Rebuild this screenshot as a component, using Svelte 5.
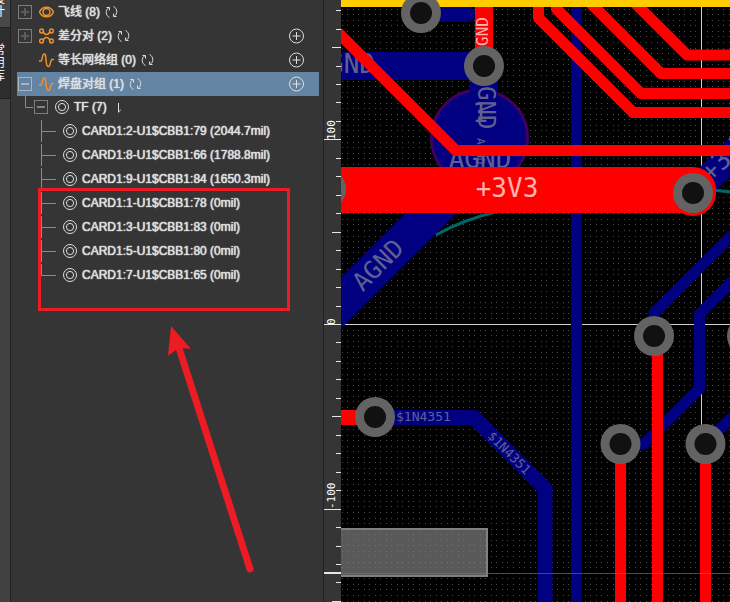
<script lang="ts">
  type Item = { label: string; level: number; icon: string; open?: boolean; toggle?: boolean; add?: boolean; last?: boolean };

  const items: Item[] = [
    { label: "飞线 (8)", level: 0, icon: "eye", toggle: true },
    { label: "差分对 (2)", level: 0, icon: "pair", toggle: true, add: true },
    { label: "等长网络组 (0)", level: 0, icon: "wave", add: true },
    { label: "焊盘对组 (1)", level: 0, icon: "wave", toggle: true, open: true, add: true },
    { label: "TF (7)", level: 1, icon: "pad", toggle: true, open: true },
    { label: "CARD1:2-U1$CBB1:79 (2044.7mil)", level: 2, icon: "pad" },
    { label: "CARD1:8-U1$CBB1:66 (1788.8mil)", level: 2, icon: "pad" },
    { label: "CARD1:9-U1$CBB1:84 (1650.3mil)", level: 2, icon: "pad" },
    { label: "CARD1:1-U1$CBB1:78 (0mil)", level: 2, icon: "pad" },
    { label: "CARD1:3-U1$CBB1:83 (0mil)", level: 2, icon: "pad" },
    { label: "CARD1:5-U1$CBB1:80 (0mil)", level: 2, icon: "pad" },
    { label: "CARD1:7-U1$CBB1:65 (0mil)", level: 2, icon: "pad", last: true },
  ];

  let selected = $state(3);

  // Board origin and zoom, in canvas units.
  const origin = { x: 701, y: 324 };
  const tickStep = 18.46;
  const gridStep = 5.53;

  const ticks = Array.from({ length: 33 }, (_, i) => i - 17).map((n) => ({
    y: Math.round(origin.y + n * tickStep),
    size: n % 10 === 0 ? 17 : n % 5 === 0 ? 9 : 5,
  }));

  const rulerLabels = [
    { text: "100", y: 140 },
    { text: "0", y: 325 },
    { text: "-100", y: 509 },
  ];

  function gridPath(x0: number, x1: number, y0: number, y1: number) {
    let d = "";
    for (let i = Math.ceil((x0 - origin.x) / gridStep); origin.x + i * gridStep < x1; i++) {
      for (let j = Math.ceil((y0 - origin.y) / gridStep); origin.y + j * gridStep < y1; j++) {
        d += `M${Math.round(origin.x + i * gridStep)} ${Math.round(origin.y + j * gridStep)}h1v1h-1z`;
      }
    }
    return d;
  }

  const vias = [
    [326, 189], [421, 13], [484, 66], [693, 193], [654, 336],
    [747, 336], [375, 417], [620.5, 444], [705.5, 444],
  ];
</script>

{#snippet icon(name: string)}
  <svg class="icon" class:orange={name !== "pad"} width="15" height="16" viewBox="0 0 15 16" aria-hidden="true">
    {#if name === "eye"}
      <path d="M0.5 8C2 4.6 4.6 3.2 7.5 3.2S13 4.6 14.5 8C13 11.4 10.4 12.8 7.5 12.8S2 11.4 0.5 8z" />
      <circle cx="7.5" cy="8" r="3.5" />
    {:else if name === "pair"}
      <circle cx="2.5" cy="3" r="1.9" /><circle cx="12.5" cy="3" r="1.9" />
      <circle cx="2.5" cy="13" r="1.9" /><circle cx="12.5" cy="13" r="1.9" />
      <path d="M4.2 3.5C4.8 5.8 5.5 6.5 7.5 6.5S10.2 5.8 10.8 3.5M4.2 12.5C4.8 10.2 5.5 9.5 7.5 9.5S10.2 10.2 10.8 12.5" />
    {:else if name === "wave"}
      <path d="M0 9H2C3.5 9 3 2 5.2 2S6.5 6 7 8 7 14.5 9.5 14.5 11 7.5 13 7.5H15" />
    {:else}
      <circle cx="7" cy="8" r="6.5" />
      <circle cx="7" cy="8" r="3.6" />
    {/if}
  </svg>
{/snippet}

<main>
  <nav class="tabs" aria-label="面板">
    <button type="button" class="tab active"><span>设计</span></button>
    <button type="button" class="tab"><span>常用库</span></button>
  </nav>

  <aside>
    <ul>
      {#each items as item, i}
        <li class="level{item.level}" class:selected={i === selected}>
          {#if item.level === 1}
            <svg class="link" width="9" height="24"><path d="M0.5 0V12.5H8" /></svg>
          {:else if item.level === 2}
            <svg class="link" width="15" height="24"><path d={item.last ? "M0.5 1V12.5H15" : "M0.5 1V23M0.5 12.5H15"} /></svg>
          {/if}
          {#if item.toggle}
            <button type="button" class="toggle" class:open={item.open} aria-label={item.label} aria-expanded={!!item.open}>
              <svg width="12" height="12"><path d={item.open ? "M2 6H10" : "M2 6H10M6 2V10"} /></svg>
            </button>
          {:else if item.level === 0}
            <span class="blank"></span>
          {/if}
          {@render icon(item.icon)}
          <button type="button" class="name" onclick={() => (selected = i)}>{item.label}</button>
          {#if item.level === 0}
            <button type="button" class="refresh" aria-label="刷新">
              <svg width="13" height="14" viewBox="0 0 13 14">
                <path d="M4.5 12.5C0.5 10.5 0 5 4 2.5M1.5 2.5H4.5V5.5M8.5 1.5C12.5 3.5 13 9 9 11.5M11.5 11.5H8.5V8.5" />
              </svg>
            </button>
          {:else if item.level === 1}
            <button type="button" class="refresh small" aria-label="刷新">
              <svg width="4" height="14"><path d="M1.5 3V12.5M1.5 12L4 9.5" /></svg>
            </button>
          {/if}
          {#if item.add}
            <button type="button" class="add" aria-label="新建">
              <svg width="16" height="16"><path d="M7.5 4V12M3.5 8H11.5" /><circle cx="7.5" cy="8" r="7" /></svg>
            </button>
          {/if}
        </li>
      {/each}
    </ul>
  </aside>

  <section class="board">
    <svg width="100%" height="100%" role="img" aria-label="PCB">
      <g transform="translate(-324 0)">
        <path class="grid" d={gridPath(341, 1400, 7, 1200)} />
        <path class="axis" d="M341 324.5H2000M701.5 0V440" />

        <g class="bottom">
          <path d="M421 14H467" stroke-width="16" />
          <path class="flat" d="M341 66H484" stroke-width="28" />
          <path class="flat" d="M484 66V138" stroke-width="28" />
          <path class="flat" d="M576.5 7V2000" stroke-width="11" />
          <path class="flat" d="M301 343L484 160" stroke-width="36" />
          <path class="flat" d="M693 194L793 94" stroke-width="28" />
          <path d="M654 336V313L754 213" stroke-width="11" />
          <path d="M754 259.5L699.5 314V388.5L644 444H620" stroke-width="11" />
          <path d="M705 444L755 394" stroke-width="11" />
          <path d="M375 417.5H474L545 488.5V2000" stroke-width="15" />
        </g>
        <circle class="round-pad" cx="479.5" cy="138" r="48" />
        <path class="flat bottom" d="M484 66V110" stroke-width="28" />

        <g class="net">
          <text x="375" y="73" font-size="26" text-anchor="end">GND</text>
          <text transform="translate(478 86) rotate(90)" font-size="24">GND</text>
          <text x="480" y="122" font-size="26" text-anchor="middle">1</text>
          <text transform="translate(477 138) rotate(90)" font-size="11">AGND</text>
          <text x="480" y="168" font-size="26" text-anchor="middle">AGND</text>
          <text transform="translate(384 271) rotate(-45)" font-size="25" text-anchor="middle">AGND</text>
          <text transform="translate(711 183) rotate(-45)" font-size="26">+3V3</text>
          <text x="396" y="421" font-size="13">$1N4351</text>
          <text transform="translate(506 456) rotate(45)" font-size="13" text-anchor="middle">$1N4351</text>
        </g>

        <path class="ratline" d="M436 235Q464 219 500 211M712 190L760 195" />

        <g class="top">
          <path d="M538.5 0V18L633 112.5H2000" stroke-width="11" />
          <path d="M556.5 0V9L641 93.5H2000" stroke-width="11" />
          <path d="M587.5 0L661 73.5H2000" stroke-width="11" />
          <path d="M632 0L687 55H2000" stroke-width="11" />
          <path d="M330 24.5L456 150.5H2000" stroke-width="11" />
          <path class="flat" d="M484 0V66" stroke-width="18" />
          <path d="M341 190H693" stroke-width="46" />
          <path d="M693 193h0" stroke-width="46" />
          <path class="flat" d="M341 417.5H375" stroke-width="15" />
          <path d="M657.5 345V2000M620.5 444V2000M705.5 444V2000" stroke-width="11" />
        </g>
        <g class="net light">
          <text transform="translate(488 46) rotate(-90)" font-size="16">GND</text>
          <text x="507" y="197" font-size="26" text-anchor="middle">+3V3</text>
        </g>

        <rect class="outline" x="341" y="0" width="2000" height="7" />
        {#each vias as [x, y]}
          <circle class="via" cx={x} cy={y} r="20" />
          <circle class="hole" cx={x} cy={y} r="11" />
        {/each}

        <rect class="smd" x="330" y="529" width="157" height="47" />
        <path class="smd-grid" d={gridPath(341, 486, 531, 575)} />
        <path class="guide" d="M341 573.5H2000" />

        <rect class="ruler" x="324" y="0" width="17" height="2000" />
        {#each ticks as t}
          <rect class="tick" x={341 - t.size} y={t.y} width={t.size} height="1" />
        {/each}
        <rect class="tick" x="324" y="572" width="17" height="2" />
        {#each rulerLabels as l}
          <text class="ruler-text" transform="translate(335 {l.y}) rotate(-90)">{l.text}</text>
        {/each}
      </g>
    </svg>
  </section>

  <div class="callout"></div>
  <svg class="arrow" width="90" height="250" aria-hidden="true">
    <path class="shaft" d="M17 22L88 243" />
    <path class="head" d="M9 0L6 30L14 24L20 22L29 23z" />
  </svg>
</main>

<style>
  :global(body) {
    margin: 0;
    background: #353535;
  }
  main {
    position: relative;
    display: flex;
    min-height: 100vh;
    overflow: hidden;
    background: #353535;
    color: #dedede;
    font-family: "Liberation Sans", "Noto Sans CJK SC", sans-serif;
    font-size: 12px;
  }
  button {
    display: flex;
    padding: 0;
    border: 0;
    background: none;
    color: inherit;
    font: inherit;
    cursor: pointer;
  }
  svg {
    flex: none;
    fill: none;
  }
  .tabs {
    flex: none;
    width: 10px;
    border-right: 1px solid #222;
    background: #414141;
  }
  .tab {
    width: 10px;
    height: 71px;
    align-items: center;
    justify-content: flex-end;
    overflow: hidden;
    border-bottom: 1px solid #222;
    background: #2d2d2d;
    color: #fff;
  }
  .tab.active {
    height: 28px;
    align-items: flex-end;
    padding-bottom: 8px;
    background: #484848;
  }
  .tab span {
    flex: none;
    width: 12px;
    margin-right: 5px;
    line-height: 13px;
    white-space: normal;
    word-break: break-all;
  }
  aside {
    flex: none;
    width: 302px;
    padding: 0 4px 0 6px;
    border-right: 1px solid #222;
  }
  ul {
    margin: 0;
    padding: 0;
    list-style: none;
  }
  li {
    display: flex;
    box-sizing: border-box;
    align-items: center;
    height: 24px;
    padding: 0 14px 0 1px;
  }
  li.level1 {
    padding-bottom: 2px;
    padding-left: 8px;
  }
  li.level2 {
    padding-bottom: 2px;
    padding-left: 24px;
  }
  li.selected {
    background: #6384a3;
  }
  .link {
    stroke: #8b8b8b;
  }
  .toggle {
    border: 1px solid #7d7d7d;
  }
  .toggle svg {
    stroke: #5c5c5c;
    stroke-width: 2;
  }
  .toggle.open svg {
    stroke: #858585;
  }
  .selected .toggle {
    border-color: #a5b5c4;
  }
  .selected .toggle svg {
    stroke: #a5b5c4;
  }
  .blank {
    width: 14px;
  }
  .icon {
    margin: 0 4px 0 7px;
    stroke: #dedede;
  }
  .icon.orange {
    stroke: #f0902c;
    stroke-width: 1.5;
  }
  .name {
    line-height: 24px;
    white-space: nowrap;
    text-shadow: 0 0 1px #dedede, 0 0 1px #dedede;
  }
  .refresh {
    margin-left: 5px;
  }
  .refresh.small {
    margin-left: 10px;
  }
  .refresh svg,
  .add svg {
    stroke: #dedede;
  }
  .add {
    margin-left: auto;
  }
  .board {
    flex: 1;
    position: relative;
    overflow: hidden;
    background: #000;
  }
  .board > svg {
    position: absolute;
    inset: 0;
  }
  .grid {
    fill: #4c4c4c;
  }
  .axis {
    stroke: #d0d0d0;
  }
  .bottom,
  .top {
    stroke: #000080;
    stroke-linecap: round;
    stroke-linejoin: round;
  }
  .top {
    stroke: #ff0000;
  }
  .flat {
    stroke-linecap: butt;
  }
  .round-pad {
    fill: #000080;
    stroke: #400060;
    stroke-width: 3;
  }
  .net {
    fill: #60608f;
    font-family: "DejaVu Sans Mono", monospace;
  }
  .net.light {
    fill: #ffb3b3;
  }
  .ratline {
    stroke: #006666;
    stroke-width: 3;
  }
  .outline {
    fill: #ffcc00;
  }
  .via {
    fill: #636363;
  }
  .hole {
    fill: #111;
  }
  .smd {
    fill: #595959;
    stroke: #808080;
    stroke-width: 2;
  }
  .smd-grid {
    fill: #727272;
  }
  .guide {
    stroke: #d030e0;
    stroke-opacity: 0.6;
  }
  .ruler {
    fill: #353535;
  }
  .tick {
    fill: #e6e6e6;
  }
  .ruler-text {
    fill: #fff;
    font-family: "DejaVu Sans Mono", monospace;
    font-size: 11px;
  }
  /* Annotation drawn over the tree */
  .callout {
    position: absolute;
    top: 188px;
    left: 38px;
    width: 246px;
    height: 117px;
    border: 3px solid #ed1c24;
    pointer-events: none;
  }
  .arrow {
    position: absolute;
    top: 326px;
    left: 162px;
    overflow: visible;
    pointer-events: none;
  }
  .shaft {
    stroke: #ed1c24;
    stroke-width: 7;
    stroke-linecap: round;
  }
  .head {
    fill: #ed1c24;
  }
</style>
